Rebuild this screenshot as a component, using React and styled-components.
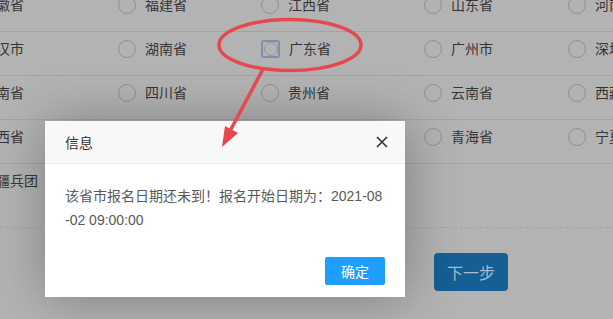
import React from "react";
import styled, { createGlobalStyle } from "styled-components";

const GlobalStyle = createGlobalStyle`
  html, body {
    margin: 0;
    padding: 0;
    width: 613px;
    height: 319px;
    overflow: hidden;
    background: #b3b3b3;
    font-family: "Liberation Sans", "Noto Sans CJK SC", sans-serif;
  }
  * { box-sizing: border-box; }
`;

const Page = styled.div`
  position: relative;
  width: 613px;
  height: 319px;
  margin-top: -12px;
`;

const Grid = styled.div`
  margin-left: -45px;
  width: 760px;
`;

const Row = styled.div`
  display: grid;
  grid-template-columns: 163px 143px 163px 144px 143px;
  height: 44px;
  padding-top: 8px;
  border-bottom: ${(p) => (p.$last ? "none" : "1px solid #a3a3a3")};
`;

const Option = styled.label`
  display: flex;
  align-items: center;
  gap: 9px;
  height: 18px;
  white-space: nowrap;
  font-size: 14px;
  color: #353535;
  line-height: 18px;
`;

const Radio = styled.span`
  flex: none;
  width: 18px;
  height: 18px;
  border-radius: 50%;
  border: 1px solid #909090;
`;

const FocusRing = styled.span`
  flex: none;
  width: 19px;
  height: 18px;
  border: 2px solid #7d90a8;
  border-radius: 3px;
  display: flex;
  align-items: center;
  justify-content: center;
  &::after {
    content: "";
    width: 12px;
    height: 12px;
    border-radius: 50%;
    border: 1px solid #969696;
  }
`;

const Footer = styled.div`
  margin-top: 19px;
  border-top: 1px dashed #a5a5a5;
  padding: 25px 0 0 434px;
`;

const NextButton = styled.button`
  width: 74px;
  height: 38px;
  border: none;
  border-radius: 4px;
  background: #155f94;
  color: #a6bccd;
  font-family: inherit;
  font-size: 16px;
  padding: 0;
`;

const Dialog = styled.div`
  position: absolute;
  left: 45px;
  top: 133px;
  width: 360px;
  background: #fff;
  box-shadow: 1px 1px 50px rgba(0, 0, 0, 0.3);
  z-index: 2;
`;

const DialogHeader = styled.div`
  display: flex;
  align-items: center;
  justify-content: space-between;
  height: 43px;
  padding: 0 17px 0 20px;
  background: #f8f8f8;
  border-bottom: 1px solid #eee;
  font-size: 14px;
  color: #333;
`;

const CloseButton = styled.span`
  display: flex;
  width: 12px;
  height: 12px;
`;

const DialogBody = styled.div`
  padding: 20px;
  font-size: 14px;
  line-height: 24px;
  color: #595959;
  word-break: break-all;
`;

const DialogActions = styled.div`
  display: flex;
  justify-content: flex-end;
  padding: 0 15px 12px;
`;

const ConfirmButton = styled.button`
  margin: 5px 5px 0;
  height: 28px;
  padding: 0 15px;
  border: 1px solid #1e9fff;
  border-radius: 2px;
  background: #1e9fff;
  color: #fff;
  font-family: inherit;
  font-size: 14px;
`;

const Annotation = styled.svg`
  position: absolute;
  left: 0;
  top: 12px;
  width: 613px;
  height: 319px;
  z-index: 3;
  pointer-events: none;
`;

const rows = [
  ["安徽省", "福建省", "江西省", "山东省", "河南省"],
  ["武汉市", "湖南省", "广东省", "广州市", "深圳市"],
  ["海南省", "四川省", "贵州省", "云南省", "西藏自治区"],
  ["陕西省", "甘肃省", "重庆市", "青海省", "宁夏回族自治区"],
  ["新疆兵团"],
];

export default function App() {
  return (
    <>
      <GlobalStyle />
      <Page>
        <Grid>
          {rows.map((r, i) => (
            <Row key={i} $last={i === rows.length - 1}>
              {r.map((name) => (
                <Option key={name}>
                  {name === "广东省" ? <FocusRing /> : <Radio />}
                  {name}
                </Option>
              ))}
            </Row>
          ))}
        </Grid>
        <Footer>
          <NextButton>下一步</NextButton>
        </Footer>

        <Dialog>
          <DialogHeader>
            <span>信息</span>
            <CloseButton>
              <svg width="12" height="12" viewBox="0 0 12 12">
                <path d="M1 1 L11 11 M11 1 L1 11" stroke="#333" strokeWidth="1.6" fill="none" />
              </svg>
            </CloseButton>
          </DialogHeader>
          <DialogBody>该省市报名日期还未到！报名开始日期为：2021-08-02 09:00:00</DialogBody>
          <DialogActions>
            <ConfirmButton>确定</ConfirmButton>
          </DialogActions>
        </Dialog>

        <Annotation viewBox="0 0 613 319">
          <ellipse cx="290" cy="45" rx="71" ry="25.5" fill="none" stroke="#e5484d" strokeWidth="3.5" />
          <path d="M262 71 L230 131" stroke="#e5484d" strokeWidth="3.5" strokeLinecap="round" />
          <polygon points="222,147 225,126 238,133" fill="#e5484d" />
        </Annotation>
      </Page>
    </>
  );
}
